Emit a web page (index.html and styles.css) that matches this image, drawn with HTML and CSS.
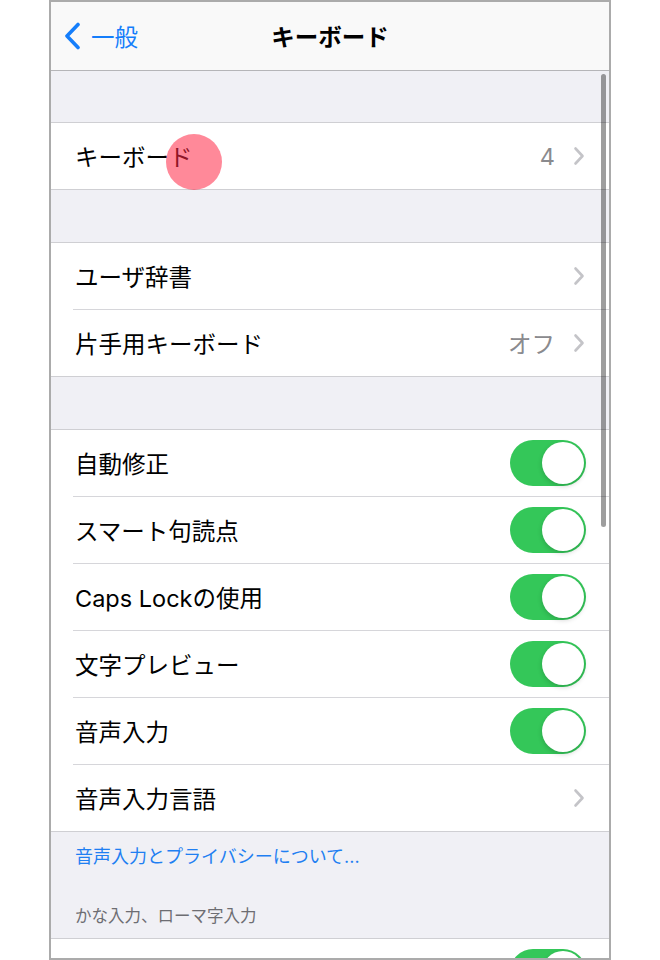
FILE: index.html
```html
<!DOCTYPE html>
<html lang="ja">
  <head>
    <meta charset="UTF-8" />
    <meta name="viewport" content="width=device-width, initial-scale=1.0" />
    <title>キーボード</title>
    <link rel="stylesheet" href="styles.css">
  </head>
  <body>
    <div class="phone">
      <header class="navbar">
        <a class="back">
          <svg class="back-icon" width="18" height="28" viewBox="0 0 18 28"><path d="M15 2.5 L4 14 L15 25.5" fill="none" stroke="#157efb" stroke-width="3.6" stroke-linecap="round" stroke-linejoin="round"/></svg>
          <span>一般</span>
        </a>
        <h1 class="title">キーボード</h1>
      </header>
      <main class="content">
        <div class="scrollbar"></div>
        <div class="touch"></div>

        <section class="group">
          <div class="row"><div class="row-body">
            <span class="label">キーボード</span>
            <span class="value">4</span>
            <svg class="chevron" width="12" height="20" viewBox="0 0 12 20"><path d="M2.5 2.5 L9.5 10 L2.5 17.5" fill="none" stroke="#c4c4c8" stroke-width="2.6" stroke-linecap="round" stroke-linejoin="round"/></svg>
          </div></div>
        </section>

        <section class="group">
          <div class="row"><div class="row-body">
            <span class="label">ユーザ辞書</span>
            <svg class="chevron" width="12" height="20" viewBox="0 0 12 20"><path d="M2.5 2.5 L9.5 10 L2.5 17.5" fill="none" stroke="#c4c4c8" stroke-width="2.6" stroke-linecap="round" stroke-linejoin="round"/></svg>
          </div></div>
          <div class="row"><div class="row-body">
            <span class="label">片手用キーボード</span>
            <span class="value">オフ</span>
            <svg class="chevron" width="12" height="20" viewBox="0 0 12 20"><path d="M2.5 2.5 L9.5 10 L2.5 17.5" fill="none" stroke="#c4c4c8" stroke-width="2.6" stroke-linecap="round" stroke-linejoin="round"/></svg>
          </div></div>
        </section>

        <section class="group">
          <div class="row"><div class="row-body">
            <span class="label">自動修正</span>
            <span class="switch"><span class="knob"></span></span>
          </div></div>
          <div class="row"><div class="row-body">
            <span class="label">スマート句読点</span>
            <span class="switch"><span class="knob"></span></span>
          </div></div>
          <div class="row"><div class="row-body">
            <span class="label">Caps Lockの使用</span>
            <span class="switch"><span class="knob"></span></span>
          </div></div>
          <div class="row"><div class="row-body">
            <span class="label">文字プレビュー</span>
            <span class="switch"><span class="knob"></span></span>
          </div></div>
          <div class="row"><div class="row-body">
            <span class="label">音声入力</span>
            <span class="switch"><span class="knob"></span></span>
          </div></div>
          <div class="row"><div class="row-body">
            <span class="label">音声入力言語</span>
            <svg class="chevron" width="12" height="20" viewBox="0 0 12 20"><path d="M2.5 2.5 L9.5 10 L2.5 17.5" fill="none" stroke="#c4c4c8" stroke-width="2.6" stroke-linecap="round" stroke-linejoin="round"/></svg>
          </div></div>
        </section>

        <p class="footer-link">音声入力とプライバシーについて...</p>
        <p class="section-header">かな入力、ローマ字入力</p>

        <section class="group">
          <div class="row"><div class="row-body">
            <span class="label"></span>
            <span class="switch"><span class="knob"></span></span>
          </div></div>
        </section>
      </main>
    </div>
  </body>
</html>
```

FILE: styles.css
```css
* {
  box-sizing: border-box;
}
body {
  margin: 0;
  background: #fff;
  font-family: "Inter", "Noto Sans CJK JP", "Noto Sans", sans-serif;
}
.phone {
  margin-left: 49px;
  width: 562px;
  height: 960px;
  border: 2px solid #ababab;
  overflow: hidden;
  background: #f0f0f5;
}
/* ナビゲーションバー */
.navbar {
  position: relative;
  height: 69px;
  background: #f9f9f9;
  border-bottom: 1px solid #b5b5b8;
  display: flex;
  align-items: center;
  justify-content: center;
}
.back {
  position: absolute;
  left: 12px;
  top: 0;
  bottom: 0;
  display: flex;
  align-items: center;
  gap: 10px;
  color: #157efb;
  font-size: 23.5px;
}
.back-icon {
  display: block;
}
.title {
  margin: 0;
  font-size: 23.5px;
  font-weight: 700;
  color: #000;
}
/* リスト */
.content {
  position: relative;
  padding-top: 51px;
}
.group {
  background: #fff;
  border-top: 1px solid #cfcfd3;
  border-bottom: 1px solid #cfcfd3;
  margin-bottom: 52px;
}
.row {
  padding-left: 22px;
}
.row-body {
  height: 67px;
  display: flex;
  align-items: center;
  padding-right: 23px;
  border-bottom: 1px solid #d6d6da;
}
.row:last-child .row-body {
  height: 66px;
  border-bottom: none;
}
.label {
  flex: 1;
  font-size: 23.5px;
  color: #000;
  padding-left: 2px;
}
.value {
  font-size: 23.5px;
  color: #8a8a8e;
  margin-right: 18px;
}
.chevron {
  display: block;
  margin-right: 1px;
}
.switch {
  width: 76px;
  height: 46px;
  border-radius: 23px;
  background: #34c759;
  display: flex;
  justify-content: flex-end;
  align-items: center;
  padding: 2px;
}
.knob {
  width: 42px;
  height: 42px;
  border-radius: 50%;
  background: #fff;
  box-shadow: 0 2px 5px rgba(0, 0, 0, 0.18);
}
.footer-link {
  margin: -38px 0 0;
  padding-left: 24px;
  height: 22px;
  line-height: 22px;
  font-size: 18px;
  color: #1f7ff2;
}
.section-header {
  margin: 37px 0 0;
  padding: 0 0 11px 24px;
  line-height: 22px;
  font-size: 16.5px;
  color: #6d6d72;
}
.footer-link + .section-header + .group {
  margin-top: 0;
}
/* 重なる要素 */
.scrollbar {
  position: absolute;
  right: 3px;
  top: 3px;
  width: 5px;
  height: 453px;
  border-radius: 3px;
  background: rgba(0, 0, 0, 0.38);
}
.touch {
  position: absolute;
  left: 115px;
  top: 63px;
  width: 56px;
  height: 56px;
  border-radius: 50%;
  background: rgba(255, 40, 70, 0.55);
  z-index: 5;
}
```
